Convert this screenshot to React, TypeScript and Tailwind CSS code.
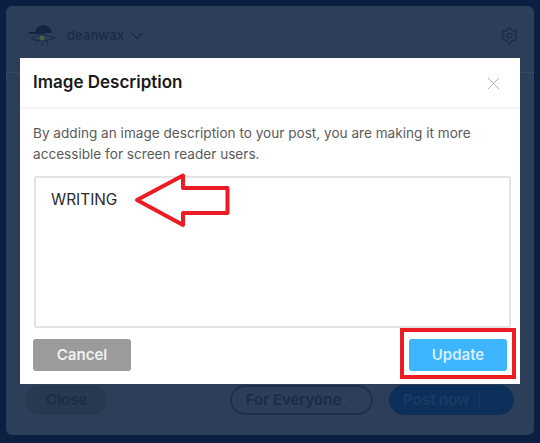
import { ChevronDown, Settings, X } from 'lucide-react';

function Avatar() {
  return (
    <svg width="28" height="28" viewBox="0 0 28 28" fill="none">
      <path d="M6 11c0-5 4-8 8-8s9 3 9 8z" fill="#16253f" />
      <path d="M0 11h16" stroke="#16253f" strokeWidth="2" />
      <path d="M3 16c4-4 16-4 21 0-5 4-17 4-21 0z" stroke="#1c2d47" strokeWidth="1.200" />
      <circle cx="13" cy="16" r="2.500" fill="#41663f" />
      <path d="M8 20l-1 3M13 21v3M18 20l1 3M24 16h4M1 16h2" stroke="#1c2d47" strokeWidth="1" />
    </svg>
  );
}

function RedArrow() {
  return (
    <svg width="98" height="56" viewBox="0 0 98 56" fill="none" className="absolute left-[134px] top-[172px]">
      <path d="M3 28L49 3.500V16H93.500V41H49V53z" stroke="#ec1c24" strokeWidth="4" strokeLinejoin="round" />
    </svg>
  );
}

function Dialog() {
  return (
    <div className="absolute left-[20px] top-[58px] flex h-[326px] w-[500px] flex-col bg-white">
      <div className="flex h-[51px] shrink-0 items-center justify-between border-b-2 border-[#f3f3f3] pl-[13px] pr-[16px] pt-[1px]">
        <h2 className="text-[17px] font-semibold text-[#1a1a1a]">Image Description</h2>
        <X size={21} strokeWidth={1.100} className="text-[#b4b4b4]" />
      </div>
      <div className="flex flex-1 flex-col px-[13px] pt-[14px]">
        <p className="text-[13.600px] leading-[21px] text-[#5a5a5a]">
          By adding an image description to your post, you are making it more accessible for screen reader users.
        </p>
        <div className="mt-[11px] ml-px h-[152px] w-[477px] rounded-[2px] border-2 border-[#e3e3e3] px-[15px] py-[12px] text-[15.400px] leading-[20px] text-[#2b2b2b]">
          WRITING
        </div>
        <div className="mt-[11px] flex items-center justify-between">
          <button className="h-[32px] w-[98px] rounded-[3px] bg-[#9b9b9b] text-[15px] font-semibold text-[#f1f1f1]">Cancel</button>
          <button className="h-[32px] w-[98px] rounded-[3px] bg-[#3db5ff] text-[15px] font-semibold text-[#d5eefd]">Update</button>
        </div>
      </div>
    </div>
  );
}

export default function App() {
  return (
    <div className="relative h-[443px] w-[540px] overflow-hidden bg-[#0b1f42] p-[6px] font-['Inter','Liberation_Sans',sans-serif]">
      <div className="flex h-[429px] flex-col justify-between rounded-[6px] bg-[#2d3f58]">
        <div className="flex h-[67px] items-start justify-between border-b border-[#31496a] pl-[23px] pr-[15px] pt-[16px]">
          <div className="flex items-center">
            <Avatar />
            <span className="ml-[10px] text-[13px] font-semibold text-[#1a2c4a]">deanwax</span>
            <ChevronDown size={20} strokeWidth={2} className="ml-[3px] text-[#1a2c4a]" />
          </div>
          <Settings size={19} strokeWidth={1.700} className="mt-[4px] text-[#1a2c4a]" />
        </div>
        <div className="flex items-center px-[20px] pb-[20px]">
          <button className="h-[30px] w-[81px] rounded-full bg-[#28384f] text-[15px] font-semibold text-[#1a2c4a]">Close</button>
          <button className="ml-auto flex h-[30px] w-[143px] items-center justify-center rounded-full border-2 border-[#1f3049] text-[15px] font-semibold text-[#1a2c4a]">
            For Everyone
            <ChevronDown size={11} strokeWidth={2} className="ml-[5px]" />
          </button>
          <button className="ml-[16px] flex h-[30px] w-[125px] items-center rounded-full bg-[#0c3059] pl-[14px] text-[15px] font-semibold text-[#1a3c64]">
            Post now
            <span className="ml-[9px] h-[14px] w-px bg-[#1a3c64]" />
            <ChevronDown size={11} strokeWidth={2} className="ml-[9px]" />
          </button>
        </div>
      </div>
      <Dialog />
      <RedArrow />
      <div className="absolute left-[400px] top-[328px] h-[51px] w-[116px] border-[4px] border-[#ec1c24]" />
    </div>
  );
}
